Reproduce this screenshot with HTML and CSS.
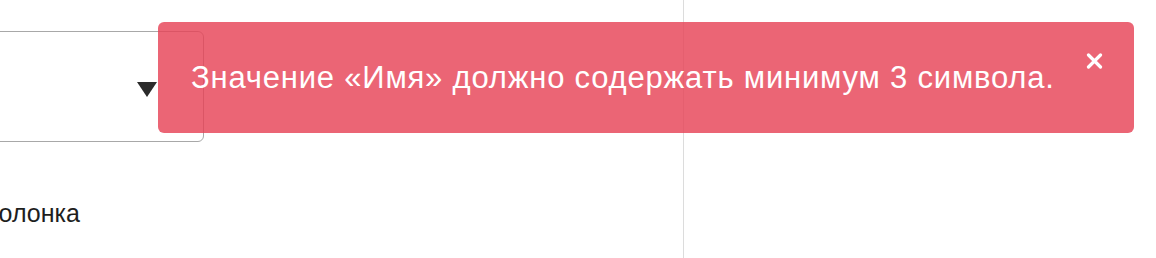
FILE: index.html
```html
<!DOCTYPE html>
<html lang="ru">
<head>
<meta charset="utf-8">
<title>Ошибка</title>
<link rel="stylesheet" href="styles.css">
</head>
<body>
<div class="page">
  <div class="col col-left">
    <div class="select">
      <span class="select-arrow"></span>
    </div>
    <div class="label">Колонка</div>
  </div>
  <div class="col col-right"></div>
</div>
<div class="toast" role="alert">
  <span class="toast-text">Значение «Имя» должно содержать минимум 3 символа.</span>
  <button class="toast-close" aria-label="Закрыть">
    <svg width="17" height="16" viewBox="0 0 17 16"><path d="M2.5 2 L14.5 14 M14.5 2 L2.5 14" stroke="#fff" stroke-width="3.2" stroke-linecap="round"/></svg>
  </button>
</div>
</body>
</html>
```
FILE: styles.css
```css
html, body {
  margin: 0;
  padding: 0;
  background: #fff;
  overflow: hidden;
}
body {
  font-family: "Liberation Sans", Arial, sans-serif;
  color: #222;
  width: 1156px;
  height: 258px;
  position: relative;
}
.page {
  display: grid;
  grid-template-columns: 684px 1fr;
  height: 258px;
}
.col-left {
  border-right: 1px solid #dcdcdc;
  padding-top: 31px;
  margin-left: -16px;
}
.select {
  box-sizing: border-box;
  width: 220px;
  height: 111px;
  border: 1.5px solid #a8a8a8;
  border-radius: 6px;
  display: flex;
  align-items: center;
  justify-content: flex-end;
  padding-right: 46px;
  padding-top: 6px;
}
.select-arrow {
  width: 0;
  height: 0;
  border-left: 10px solid transparent;
  border-right: 10px solid transparent;
  border-top: 15px solid #2b2b2b;
}
.label {
  margin-top: 57px;
  font-size: 25px;
  line-height: 28px;
  color: #1e1e1e;
}
.toast {
  position: absolute;
  left: 158px;
  top: 22px;
  width: 976px;
  height: 111px;
  box-sizing: border-box;
  background: rgba(231, 67, 87, 0.82);
  border-radius: 6px;
  display: flex;
  align-items: center;
  padding-left: 33px;
}
.toast-text {
  font-size: 31px;
  letter-spacing: 0.8px;
  color: #fff;
  line-height: normal;
  padding-top: 1px;
}
.toast-close {
  position: absolute;
  top: 31px;
  right: 31px;
  border: 0;
  padding: 0;
  margin: 0;
  background: none;
  width: 17px;
  height: 16px;
  display: block;
}
.toast-close svg {
  display: block;
}
```
